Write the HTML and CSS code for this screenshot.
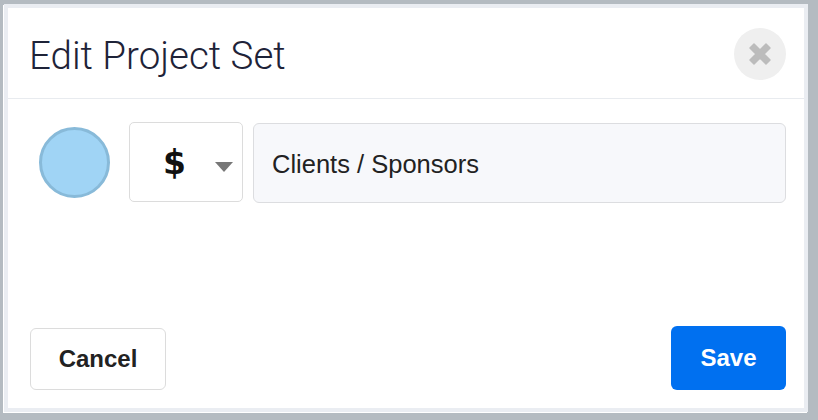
FILE: index.html
```html
<!DOCTYPE html>
<html>
<head>
<meta charset="utf-8">
<link rel="stylesheet" href="styles.css">
</head>
<body>
<div class="dialog">
  <div class="panel">
    <div class="header">
      <h1 class="title">Edit Project Set</h1>
      <button class="close" aria-label="Close">
        <svg width="28" height="28" viewBox="0 0 28 28"><path d="M4 8 L8 4 L14 10 L20 4 L24 8 L18 14 L24 20 L20 24 L14 18 L8 24 L4 20 L10 14 Z" fill="#bcbcbc" stroke="#bcbcbc" stroke-width="1.5" stroke-linejoin="round"/></svg>
      </button>
    </div>
    <div class="body">
      <div class="swatch"></div>
      <div class="icon-select">
        <span class="dollar">$</span>
        <span class="caret"></span>
      </div>
      <div class="name-input">Clients / Sponsors</div>
    </div>
    <div class="footer">
      <button class="btn btn-cancel">Cancel</button>
      <button class="btn btn-save">Save</button>
    </div>
  </div>
</div>
</body>
</html>
```
FILE: styles.css
```css
html, body {
  margin: 0;
  padding: 0;
}
body {
  background: #b4bbc1;
  width: 818px;
  height: 420px;
  overflow: hidden;
  font-family: "Liberation Sans", Arial, sans-serif;
}
.dialog {
  margin: 4px 0 0 4px;
  width: 804px;
  height: 408px;
  box-sizing: border-box;
  border: 4px solid #eaedf2;
  box-shadow: -1px 1px 0 0 #ffffff;
  background: #fff;
}
.panel {
  height: 100%;
  display: flex;
  flex-direction: column;
}
.header {
  height: 91px;
  flex: none;
  box-sizing: border-box;
  border-bottom: 1px solid #e8ebef;
  display: flex;
  align-items: center;
  justify-content: space-between;
  padding: 0 18px 0 21px;
}
.title {
  margin: 0;
  font-family: Roboto, "Liberation Sans", sans-serif;
  font-weight: 300;
  font-size: 38.5px;
  color: #1e2338;
  margin-top: 4px;
}
.close {
  width: 52px;
  height: 52px;
  border-radius: 50%;
  border: none;
  background: #efefef;
  padding: 0;
  display: flex;
  align-items: center;
  justify-content: center;
  margin-top: 1px;
}
.body {
  flex: 1;
  display: flex;
  align-items: flex-start;
  padding: 24px 18px 0 31px;
}
.swatch {
  width: 65px;
  height: 65px;
  border-radius: 50%;
  background: #a0d4f5;
  border: 3px solid #88bad9;
  margin-top: 4px;
  margin-right: 19px;
  flex: none;
}
.icon-select {
  width: 114px;
  height: 80px;
  box-sizing: border-box;
  border: 1px solid #dcdcdc;
  border-radius: 5px;
  display: flex;
  align-items: center;
  padding-left: 33px;
  flex: none;
  margin-right: 10px;
  margin-top: -1px;
}
.dollar {
  font-family: "DejaVu Sans", sans-serif;
  font-weight: bold;
  font-size: 33px;
  color: #111;
}
.caret {
  width: 0;
  height: 0;
  border-left: 9px solid transparent;
  border-right: 9px solid transparent;
  border-top: 10px solid #777;
  margin-left: 29px;
  margin-top: 10px;
}
.name-input {
  flex: 1;
  height: 80px;
  box-sizing: border-box;
  border: 1px solid #dcdde0;
  border-radius: 6px;
  background: #f7f8fb;
  display: flex;
  align-items: center;
  padding-left: 18px;
  padding-top: 2px;
  font-size: 25.5px;
  color: #222;
}
.footer {
  flex: none;
  display: flex;
  justify-content: space-between;
  align-items: flex-end;
  padding: 0 18px 18px 22px;
}
.btn {
  font-family: "Liberation Sans", Arial, sans-serif;
  font-weight: bold;
  font-size: 24px;
  border-radius: 6px;
  cursor: pointer;
}
.btn-cancel {
  width: 136px;
  height: 62px;
  background: #fff;
  border: 1px solid #dcdcdc;
  color: #222;
}
.btn-save {
  width: 115px;
  height: 64px;
  background: #0070f0;
  border: none;
  color: #fff;
}
```
